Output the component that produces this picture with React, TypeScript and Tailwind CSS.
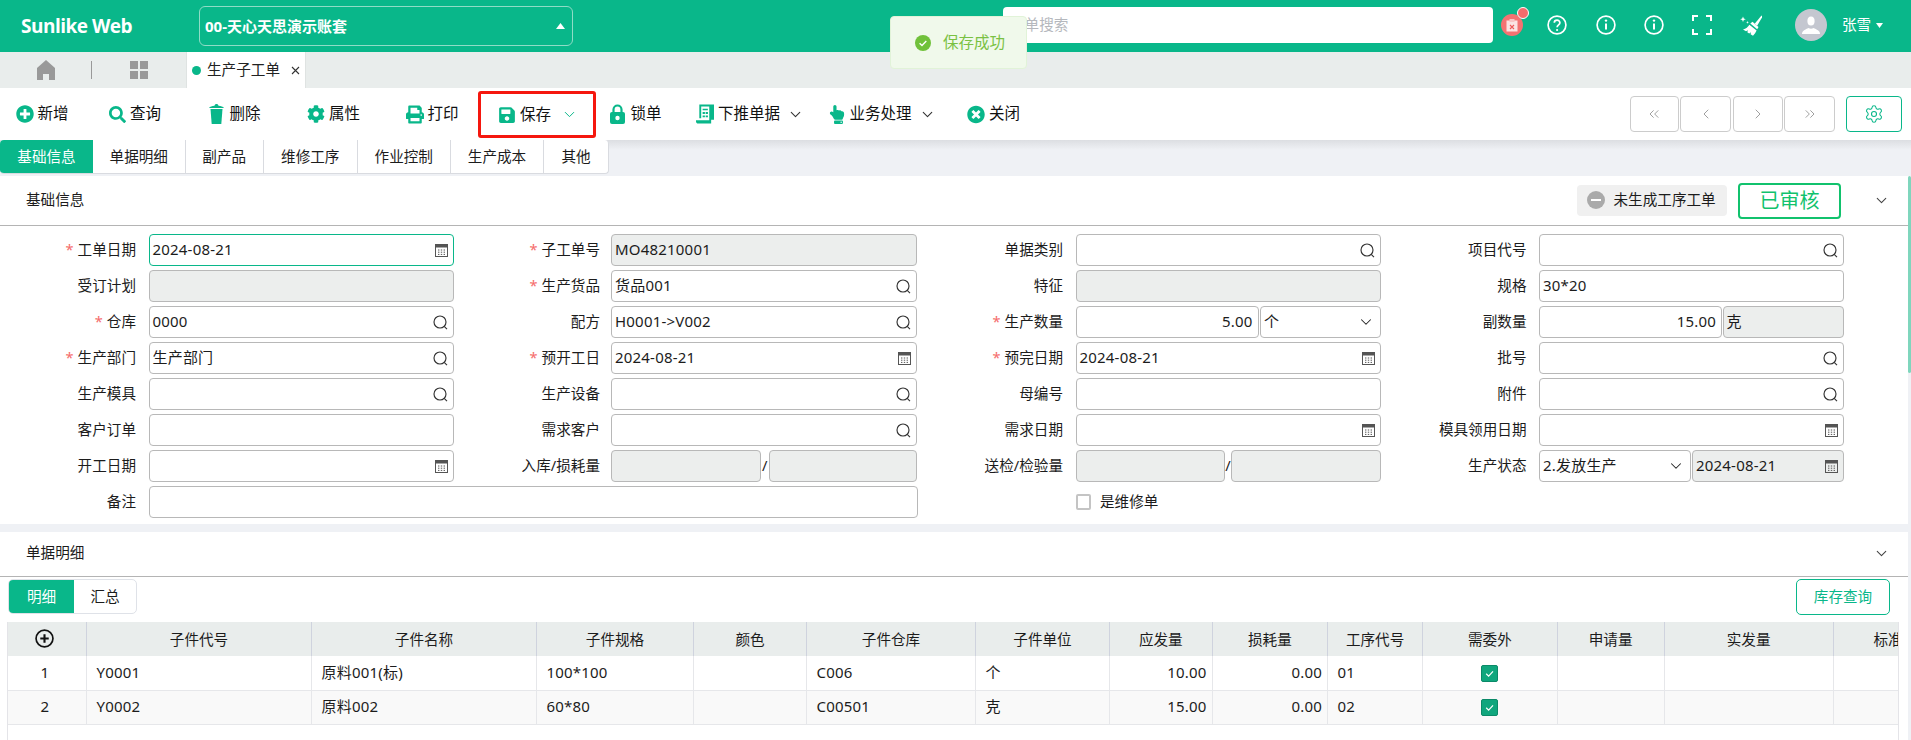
import React from "react";
import { FaPlusCircle, FaSearch, FaCog, FaPrint, FaSave, FaHandPointUp, FaTimesCircle } from "react-icons/fa";
import { ChevronDown, ChevronsLeft, ChevronLeft, ChevronRight, ChevronsRight, Settings } from "lucide-react";

function CalIcon() {
  return (
    <svg width="13" height="14" viewBox="0 0 13 14" className="text-[#555] shrink-0">
      <rect x="0.5" y="1.5" width="12" height="12" fill="none" stroke="currentColor" />
      <rect x="0.5" y="1.5" width="12" height="3" fill="currentColor" />
      <path d="M3 7h1.4M5.8 7h1.4M8.6 7h1.4M3 9.2h1.4M5.8 9.2h1.4M8.6 9.2h1.4M3 11.4h1.4M5.8 11.4h1.4M8.6 11.4h1.4" stroke="currentColor" strokeWidth="1" />
    </svg>
  );
}
function SearchIcon() {
  return <svg width="15" height="15" viewBox="0 0 15 15" fill="none" stroke="#333" strokeWidth="1.15" className="shrink-0"><circle cx="7" cy="7" r="6" /><path d="M11.2 11.4l2.8 2.8" /></svg>;
}
function SelIcon() {
  return <ChevronDown size={18} strokeWidth={1.4} className="text-[#222] shrink-0" />;
}

type Ic = "s" | "c" | "d" | undefined;
function Box({ v, ic, dis, focus, right, w }: { v?: string; ic?: Ic; dis?: boolean; focus?: boolean; right?: boolean; w: string }) {
  return (
    <div className={`${w} h-[32px] shrink-0 flex items-center rounded-[4px] border pl-[3px] pr-[5px] text-[15px] tracking-[0.2px] text-[#1c1c1c] ${focus ? "border-[#09b78a]" : "border-[#b8b8b8]"} ${dis ? "bg-[#eceeed]" : "bg-white"} ${right ? "justify-end" : "justify-between"}`}>
      {v ? <span className="whitespace-nowrap -mt-[2px]">{v}</span> : <span />}
      {ic === "s" && <SearchIcon />}
      {ic === "c" && <CalIcon />}
      {ic === "d" && <SelIcon />}
    </div>
  );
}

function Label({ t, req, c2 }: { t: string; req?: boolean; c2?: boolean }) {
  return (
    <div className={`${c2 ? "w-[137.5px] mr-[11px]" : "w-[136px] mr-[12.5px]"} shrink-0 text-right text-[14.6px] text-[#1c1c1c] whitespace-nowrap`}>
      {req && <span className="text-[#f56c6c] mr-[4px]">*</span>}
      {t}
    </div>
  );
}

function F({ t, req, v, ic, dis, focus, c2 }: { t: string; req?: boolean; v?: string; ic?: Ic; dis?: boolean; focus?: boolean; c2?: boolean }) {
  return (
    <div className="flex items-center h-[32px]">
      <Label t={t} req={req} c2={c2} />
      <Box w={c2 ? "w-[306px]" : "w-[305px]"} v={v} ic={ic} dis={dis} focus={focus} />
    </div>
  );
}

function Tool({ w, icon, t, chev, className }: { w: string; icon: React.ReactNode; t: string; chev?: "g" | "d"; className?: string }) {
  return (
    <div className={`${w} shrink-0 flex items-center text-[15.5px] text-[#111] whitespace-nowrap ${className ?? ""}`}>
      <span className="flex items-center justify-center w-[18px] h-[20px] mr-[4px] text-[#09b78a] shrink-0">{icon}</span>
      <span>{t}</span>
      {chev === "g" && <ChevronDown size={17} strokeWidth={1.4} className="ml-[10px] text-[#09b78a]" />}
      {chev === "d" && <ChevronDown size={17} strokeWidth={1.5} className="ml-[7px] text-[#333]" />}
    </div>
  );
}

const cols: [string, string][] = [
  ["", "w-[78.5px]"],
  ["子件代号", "w-[225px]"],
  ["子件名称", "w-[225px]"],
  ["子件规格", "w-[157px]"],
  ["颜色", "w-[113px]"],
  ["子件仓库", "w-[169px]"],
  ["子件单位", "w-[134px]"],
  ["应发量", "w-[102.6px]"],
  ["损耗量", "w-[115.5px]"],
  ["工序代号", "w-[95px]"],
  ["需委外", "w-[134.5px]"],
  ["申请量", "w-[107px]"],
  ["实发量", "w-[169px]"],
  ["标准", "w-[110px]"],
];

const rows = [
  ["1", "Y0001", "原料001(标)", "100*100", "", "C006", "个", "10.00", "0.00", "01"],
  ["2", "Y0002", "原料002", "60*80", "", "C00501", "克", "15.00", "0.00", "02"],
];

function Check() {
  return (
    <span className="inline-flex items-center justify-center w-[17px] h-[17px] rounded-[2px] bg-[#10a67d] border border-[#0b8a68] align-middle">
      <svg width="11" height="11" viewBox="0 0 10 10" fill="none" stroke="#fff" strokeWidth="1.1"><path d="M2 5.2l2.2 2.2L8.2 3" /></svg>
    </span>
  );
}

function InfoCircle() {
  return (
    <svg width="20" height="20" viewBox="0 0 20 20" fill="none" stroke="#fff" strokeWidth="1.7" className="shrink-0 block">
      <circle cx="10" cy="10" r="8.9" />
      <path d="M10 8.6v6" strokeWidth="2" />
      <circle cx="10" cy="5.6" r="1.2" fill="#fff" stroke="none" />
    </svg>
  );
}

export default function App() {
  return (
    <div className="relative w-[1911px] h-[740px] overflow-hidden bg-[#eff1f5] text-[14.6px] font-['Noto_Sans','Noto_Sans_CJK_SC',sans-serif]">
      {/* header */}
      <div className="h-[52px] flex items-center bg-[#09b78a]">
        <div className="w-[199px] shrink-0 pl-[21px] text-white font-bold text-[19px] font-['Open_Sans','Noto_Sans_CJK_SC',sans-serif] tracking-[-0.5px]">Sunlike Web</div>
        <div className="w-[373.5px] h-[40px] shrink-0 flex items-center justify-between rounded-[6px] border border-[#8fdcc6] pl-[5px] pr-[7px] text-white font-bold text-[15px]">
          <span>00-天心天思演示账套</span>
          <svg width="9" height="6" viewBox="0 0 9 6" fill="#fff"><path d="M4.5 0l4.5 6H0z" /></svg>
        </div>
        <div className="ml-[430.5px] w-[490px] h-[36px] -mt-[2px] shrink-0 rounded-[4px] bg-white flex items-center pl-[7px] text-[#b5b8bd] text-[14.6px]">菜单搜索</div>
        <div className="relative ml-[8px] w-[22px] h-[22px] -mt-[2px] rounded-full bg-[#f37272] flex items-center justify-center shrink-0">
          <svg width="12" height="13" viewBox="0 0 12 13"><rect x="0.5" y="1.5" width="11" height="11" fill="#fbe3e3" /><rect x="3.5" y="0" width="5" height="3" fill="#f9c5c5" /><path d="M4 6l4 4M8 6l-4 4" stroke="#ee5a5a" strokeWidth="1.1" /></svg>
          <span className="absolute -top-[7px] left-[15.5px] w-[12px] h-[12px] rounded-full bg-[#f56c6c] border border-white" />
        </div>
        <svg width="20" height="20" viewBox="0 0 20 20" fill="none" stroke="#fff" strokeWidth="1.7" className="ml-[24px] -mt-[2px] shrink-0">
          <circle cx="10" cy="10" r="8.9" />
          <path d="M7.3 7.7c0-3.4 5.6-3.4 5.6 0 0 2.2-2.8 2.2-2.8 4.6" />
          <circle cx="10.1" cy="15" r="1.1" fill="#fff" stroke="none" />
        </svg>
        <span className="ml-[29px] -mt-[2px]"><InfoCircle /></span>
        <span className="ml-[28px] -mt-[2px]"><InfoCircle /></span>
        <svg width="20" height="20" viewBox="0 0 20 20" fill="none" stroke="#fff" strokeWidth="2" className="ml-[28px] -mt-[2px] shrink-0">
          <path d="M1 6V1h5M14 1h5v5M19 14v5h-5M6 19H1v-5" />
        </svg>
        <svg width="22" height="21" viewBox="0 0 22 21" fill="#fff" className="ml-[28px] -mt-[2px] shrink-0">
          <path d="M21.5 0.5l-6.8 8.2 2.4 2 5.4-9z" />
          <path d="M12.5 6.8l6 5.2-1.3 2.2-6.9-5.6z" />
          <path d="M9.4 9.8l7.2 5.8c-.8 1.9-2 3.6-3.6 5.2l-2.4-1.6.4-2-1.8 1.2-1.9-1.2.7-1.9-2 .9L3 14.5c3-.8 5-2.5 6.4-4.7z" />
          <path d="M3 1.5l.8 2 2 .8-2 .8-.8 2-.8-2-2-.8 2-.8zM7.5 6l.4 1 1 .4-1 .4-.4 1-.4-1-1-.4 1-.4z" />
        </svg>
        <div className="ml-[33px] w-[32px] h-[32px] -mt-[2px] rounded-full bg-[#c4c7d0] flex items-center justify-center shrink-0 overflow-hidden">
          <svg width="20" height="20" viewBox="0 0 20 20" fill="#fff"><ellipse cx="10" cy="6" rx="3.6" ry="4.5" /><path d="M1 19c0-3.5 3.5-4.5 6.5-6 1.5 1 3.5 1 5 0 3 1.500 6.500 2.500 6.500 6z" /></svg>
        </div>
        <span className="ml-[15px] -mt-[2px] text-white text-[14.6px]">张雪</span>
        <svg width="7" height="5" viewBox="0 0 7 5" fill="#fff" className="ml-[5px] -mt-[2px]"><path d="M0 0h7L3.5 5z" /></svg>
      </div>

      {/* page tabs */}
      <div className="h-[36px] flex items-center bg-[#e9edec]">
        <svg width="18" height="20" viewBox="0 0 18 20" fill="#999" className="ml-[37px] shrink-0"><path d="M9 0l9 8v12h-6v-6H6v6H0V8z" /></svg>
        <span className="ml-[36px] w-px h-[18px] bg-[#999] shrink-0" />
        <svg width="18" height="18" viewBox="0 0 18 18" fill="#999" className="ml-[38px] shrink-0"><rect width="8" height="8" /><rect x="10" width="8" height="8" /><rect y="10" width="8" height="8" /><rect x="10" y="10" width="8" height="8" /></svg>
        <div className="ml-[37.5px] w-[120.5px] h-[36px] shrink-0 flex items-center bg-white border-x border-[#dfe3e2] pl-[5.5px]">
          <span className="w-[9px] h-[9px] rounded-full bg-[#09b78a] mr-[6px] shrink-0" />
          <span className="text-[#222]">生产子工单</span>
          <svg width="9" height="9" viewBox="0 0 9 9" stroke="#333" strokeWidth="1.1" className="ml-[11px]"><path d="M1 1l7 7M8 1l-7 7" /></svg>
        </div>
      </div>

      {/* toolbar */}
      <div className="h-[52px] flex items-center bg-white pl-[15.5px]">
        <Tool w="w-[92.5px]" icon={<FaPlusCircle size={18} />} t="新增" />
        <Tool w="w-[99.5px]" icon={<FaSearch size={17} />} t="查询" />
        <Tool w="w-[99.5px]" icon={
          <svg width="15" height="20" viewBox="0 0 15 20" fill="#09b78a"><path d="M1.5 5h12l-1.2 15H2.7z" /><path d="M0 4c1-1.500 3-2 5.500-2.300C5.700.6 6.500 0 7.500 0s1.800.6 2 1.700C12 2 14 2.500 15 4z" /></svg>
        } t="删除" />
        <Tool w="w-[98.5px]" icon={<FaCog size={18} />} t="属性" />
        <Tool w="w-[72.5px]" icon={<FaPrint size={19} />} t="打印" />
        <Tool w="w-[118px]" className="h-[47px] border-[3px] border-[#f5170e] rounded-[3px] pl-[17px] mt-[1px]" icon={<FaSave size={18} />} t="保存" chev="g" />
        <Tool w="w-[100px] pl-[12.5px]" icon={
          <svg width="15" height="20" viewBox="0 0 15 20"><path d="M3.5 9V5.5a4 4 0 0 1 8 0V9" fill="none" stroke="#09b78a" strokeWidth="2.2" /><rect y="8" width="15" height="12" rx="2" fill="#09b78a" /><circle cx="7.5" cy="14" r="2.2" fill="#fff" /></svg>
        } t="锁单" />
        <Tool w="w-[131.5px]" icon={
          <svg width="19" height="20" viewBox="0 0 19 20"><path fill="#09b78a" d="M3.5 0H19v16h-3v4H2.500C1 20 0 19 0 17.800V16.500h14V2H5.500v12.500h-2z" /><path fill="#09b78a" d="M7 4.500h5.500V6H7zM7 8h2.400v2H7zM10.200 8h2.400v2h-2.400zM7 11.500h2.400v1.800H7zM10.200 11.500h2.400v1.800h-2.400z" /></svg>
        } t="下推单据" chev="d" />
        <Tool w="w-[139.5px]" icon={<FaHandPointUp size={19} />} t="业务处理" chev="d" />
        <Tool w="w-[100px]" icon={<FaTimesCircle size={19} />} t="关闭" />
        <div className="ml-[562.5px] flex items-center gap-[1.5px]">
          <div className="w-[49px] h-[36px] flex items-center justify-center rounded-[4px] border border-[#ccc] text-[#888]"><ChevronsLeft size={16} strokeWidth={1.2} /></div>
          <div className="w-[51px] h-[36px] flex items-center justify-center rounded-[4px] border border-[#ccc] text-[#888]"><ChevronLeft size={16} strokeWidth={1.2} /></div>
          <div className="w-[50px] h-[36px] flex items-center justify-center rounded-[4px] border border-[#ccc] text-[#888]"><ChevronRight size={16} strokeWidth={1.2} /></div>
          <div className="w-[51px] h-[36px] flex items-center justify-center rounded-[4px] border border-[#ccc] text-[#888]"><ChevronsRight size={16} strokeWidth={1.2} /></div>
          <div className="ml-[9.5px] w-[56px] h-[36px] flex items-center justify-center rounded-[4px] border border-[#09b78a] text-[#09b78a]"><Settings size={20} strokeWidth={1.3} /></div>
        </div>
      </div>

      {/* sub tabs */}
      <div className="h-[36px] pb-[2px] bg-[linear-gradient(#dcdee2,#eff1f5_10px)]">
        <div className="inline-flex h-[34px] rounded-[4px] border-b border-r border-[#d9dbe0] bg-white text-[14.6px] text-[#1c1c1c] overflow-hidden">
          <div className="w-[93px] flex items-center justify-center bg-[#09b78a] text-white">基础信息</div>
          <div className="w-[92.5px] flex items-center justify-center border-r border-[#d9dbe0]">单据明细</div>
          <div className="w-[78.5px] flex items-center justify-center border-r border-[#d9dbe0]">副产品</div>
          <div className="w-[93.5px] flex items-center justify-center border-r border-[#d9dbe0]">维修工序</div>
          <div className="w-[93.5px] flex items-center justify-center border-r border-[#d9dbe0]">作业控制</div>
          <div className="w-[93px] flex items-center justify-center border-r border-[#d9dbe0]">生产成本</div>
          <div className="w-[64px] flex items-center justify-center">其他</div>
        </div>
      </div>

      {/* right scrollbar + main column */}
      <div className="flex">
        <div className="w-[1908px] shrink-0">
          {/* basic info */}
          <div className="bg-white h-[348px]">
            <div className="h-[50px] flex items-center border-b border-[#b4b4b4] pl-[26px] text-[#1c1c1c]">
              <span className="-mt-[2px]">基础信息</span>
              <div className="ml-auto flex items-center h-[31px] w-[150.5px] rounded-[4px] bg-[#f0f0f0] pl-[10px] text-[14.6px] -mt-[1px]">
                <span className="w-[18px] h-[18px] rounded-full bg-[#aaa] flex items-center justify-center mr-[9px] shrink-0"><span className="w-[10px] h-[2.5px] bg-white" /></span>
                未生成工序工单
              </div>
              <div className="ml-[11px] w-[103px] h-[36px] flex items-center justify-center rounded-[4px] border-2 border-[#11c26d] text-[#11c26d] text-[20px]">已审核</div>
              <ChevronDown size={17} strokeWidth={1.5} className="ml-[32px] mr-[18px] text-[#444]" />
            </div>
            <div className="grid grid-cols-[462.5px_464.5px_463.5px_463.5px] gap-y-[4px] pt-[8px]">
              <F t="工单日期" req v="2024-08-21" ic="c" focus />
              <F c2 t="子工单号" req v="MO48210001" dis />
              <F t="单据类别" ic="s" />
              <F t="项目代号" ic="s" />

              <F t="受订计划" dis />
              <F c2 t="生产货品" req v="货品001" ic="s" />
              <F t="特征" dis />
              <F t="规格" v="30*20" />

              <F t="仓库" req v="0000" ic="s" />
              <F c2 t="配方" v="H0001->V002" ic="s" />
              <div className="flex items-center h-[32px]">
                <Label t="生产数量" req />
                <Box w="w-[183px]" v="5.00" right />
                <Box w="w-[120.5px] ml-[1.5px]" v="个" ic="d" />
              </div>
              <div className="flex items-center h-[32px]">
                <Label t="副数量" />
                <Box w="w-[183px]" v="15.00" right />
                <Box w="w-[121.5px] ml-[0.5px]" v="克" dis />
              </div>

              <F t="生产部门" req v="生产部门" ic="s" />
              <F c2 t="预开工日" req v="2024-08-21" ic="c" />
              <F t="预完日期" req v="2024-08-21" ic="c" />
              <F t="批号" ic="s" />

              <F t="生产模具" ic="s" />
              <F c2 t="生产设备" ic="s" />
              <F t="母编号" />
              <F t="附件" ic="s" />

              <F t="客户订单" />
              <F c2 t="需求客户" ic="s" />
              <F t="需求日期" ic="c" />
              <F t="模具领用日期" ic="c" />

              <F t="开工日期" ic="c" />
              <div className="flex items-center h-[32px]">
                <Label c2 t="入库/损耗量" />
                <Box w="w-[150px]" dis />
                <span className="w-[7.5px] text-center text-[#1c1c1c] shrink-0">/</span>
                <Box w="w-[148.5px]" dis />
              </div>
              <div className="flex items-center h-[32px]">
                <Label t="送检/检验量" />
                <Box w="w-[149.5px]" dis />
                <span className="w-[6px] text-center text-[#1c1c1c] shrink-0">/</span>
                <Box w="w-[149.5px]" dis />
              </div>
              <div className="flex items-center h-[32px]">
                <Label t="生产状态" />
                <Box w="w-[151.5px]" v="2.发放生产" ic="d" />
                <Box w="w-[152px] ml-[1.5px]" v="2024-08-21" ic="c" dis />
              </div>

              <div className="col-span-2 flex items-center h-[32px] pr-[9.5px]">
                <Label t="备注" />
                <Box w="flex-1" />
              </div>
              <div className="flex items-center h-[32px] pl-[148.5px]">
                <span className="w-[15.5px] h-[16px] rounded-[2px] border-2 border-[#c4c4c4] bg-white mr-[9px]" />
                <span className="text-[#1c1c1c]">是维修单</span>
              </div>
            </div>
          </div>

          {/* details */}
          <div className="mt-[8px] bg-white h-[208px]">
            <div className="h-[44.5px] flex items-center justify-between border-b border-[#b4b4b4] pl-[26px] text-[#1c1c1c]">
              <span className="-mt-[2px]">单据明细</span>
              <ChevronDown size={17} strokeWidth={1.5} className="mr-[18px] text-[#444]" />
            </div>
            <div className="flex items-center justify-between h-[45.5px] pl-[8px] pr-[18px]">
              <div className="flex h-[35px] w-[129px] rounded-[5px] border border-[#dfe2e8] overflow-hidden -mt-[5px]">
                <div className="w-[65px] flex items-center justify-center bg-[#09b78a] text-white">明细</div>
                <div className="flex-1 flex items-center justify-center text-[#1c1c1c]">汇总</div>
              </div>
              <div className="w-[94px] h-[36px] -mt-[4px] flex items-center justify-center rounded-[5px] border border-[#09b78a] text-[#09b78a]">库存查询</div>
            </div>
            <div className="ml-[7px] w-[1892px] h-[118px] border-x border-[#e4e4e8] overflow-hidden">
              <table className="table-fixed w-[1935px] border-collapse text-[14.6px] text-[#1c1c1c]">
                <thead>
                  <tr className="h-[34px] bg-[#e9edec]">
                    {cols.map(([t, w], i) => (
                      <th key={i} className={`${w} font-normal text-center border-r-[1.5px] border-[#cfd3de] whitespace-nowrap overflow-hidden p-0 pt-[2px] ${i === 0 ? "pr-[6px]" : ""}`}>
                        {i === 0 ? (
                          <svg width="19" height="19" viewBox="0 0 18 18" fill="none" stroke="#111" strokeWidth="1.6" className="inline-block -mt-[6px]"><circle cx="9" cy="9" r="8" /><path d="M9 5v8M5 9h8" strokeWidth="2" /></svg>
                        ) : t}
                      </th>
                    ))}
                  </tr>
                </thead>
                <tbody>
                  {rows.map((r, ri) => (
                    <tr key={ri} className={`h-[34px] border-b-[1.5px] border-[#e6e7ea] ${ri === 1 ? "bg-[#f9f9f9]" : "bg-white"}`}>
                      {cols.map((_, i) => {
                        const v = r[i] ?? "";
                        const cls = i === 0 ? "text-center pr-[4px]" : i === 10 ? "text-center" : i === 7 || i === 8 ? "text-right pr-[5px]" : "pl-[9.5px]";
                        return (
                          <td key={i} className={`${cls} border-r border-[#e6e7ea] whitespace-nowrap p-0 pb-[2px] text-[15px] tracking-[0.2px]`}>
                            {i === 10 ? <Check /> : v}
                          </td>
                        );
                      })}
                    </tr>
                  ))}
                </tbody>
              </table>
            </div>
          </div>
        </div>
        <div className="w-[3px] bg-white h-[197px]"><div className="w-[3px] h-[197px] rounded-[2px] bg-[#7fd6bd]" /></div>
      </div>

      {/* toast */}
      <div className="absolute left-[890px] top-[16px] w-[137px] h-[53px] flex items-center rounded-[4px] border border-[#e1f3d8] bg-[#f0f9eb] pl-[24px] text-[#7ac143] text-[15.5px]">
        <svg width="16" height="16" viewBox="0 0 16 16" className="mr-[12px] shrink-0"><circle cx="8" cy="8" r="8" fill="#70c13a" /><path d="M4.6 8.2l2.4 2.3 4.3-4.5" fill="none" stroke="#fff" strokeWidth="1.4" /></svg>
        保存成功
      </div>
    </div>
  );
}
